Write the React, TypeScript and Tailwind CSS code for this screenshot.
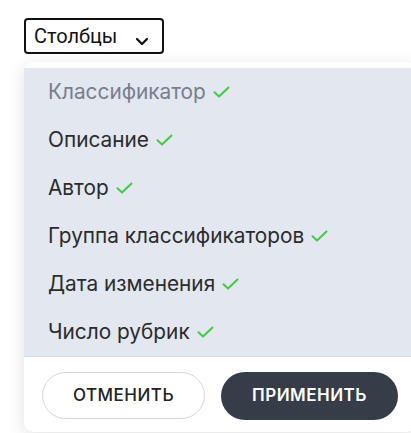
import React from "react";

const items = [
  { label: "Классификатор", disabled: true },
  { label: "Описание" },
  { label: "Автор" },
  { label: "Группа классификаторов" },
  { label: "Дата изменения" },
  { label: "Число рубрик" },
];

function Check() {
  return (
    <svg width="17" height="12" viewBox="0 0 17 12" fill="none" className="shrink-0">
      <path d="M1.5 6.2 L6 10.5 L15.5 1.5" stroke="#45c845" strokeWidth="2" strokeLinecap="round" strokeLinejoin="round" />
    </svg>
  );
}

export default function App() {
  return (
    <div className="w-[411px] h-[433px] overflow-hidden bg-white" style={{ fontFamily: "Inter, 'Noto Sans', sans-serif" }}>
      <div className="pl-[24px] pt-[18px]">
        <button className="flex items-center w-[140px] h-[36px] border-2 border-[#111] rounded-[4px] pl-[8px] text-[20px] text-[#111] bg-white leading-none">
          <span style={{ fontFamily: "Roboto, sans-serif" }}>Столбцы</span>
          <svg width="14" height="9" viewBox="0 0 14 9" className="ml-[18px] mt-[10px]" fill="none">
            <path d="M2 2 L7 7 L12 2" stroke="#111" strokeWidth="2.2" strokeLinecap="round" strokeLinejoin="round" />
          </svg>
        </button>
        <div className="mt-[8px] w-[392px] bg-white rounded-[10px] pt-[6px] pb-[12px] shadow-[0_4px_18px_rgba(0,0,0,0.12)]">
          <div className="bg-[#e2e7f0] border-b border-[#d3d9e3]">
            {items.map((it) => (
              <div key={it.label} className="h-[48px] flex items-center pl-[24px] gap-[7px]">
                <span className={`text-[20.8px] leading-none ${it.disabled ? "text-[#777e8b]" : "text-[#2b2b2b]"}`}>{it.label}</span>
                <Check />
              </div>
            ))}
          </div>
          <div className="flex gap-[16px] pl-[18px] pt-[15px]">
            <button className="w-[163px] h-[47px] rounded-full border border-[#cfd6e2] bg-white text-[#222] text-[17px] font-medium tracking-[0.5px]">
              ОТМЕНИТЬ
            </button>
            <button className="w-[177px] h-[48px] rounded-full bg-[#363c48] text-white text-[17px] font-semibold tracking-[0.5px]">
              ПРИМЕНИТЬ
            </button>
          </div>
        </div>
      </div>
    </div>
  );
}
